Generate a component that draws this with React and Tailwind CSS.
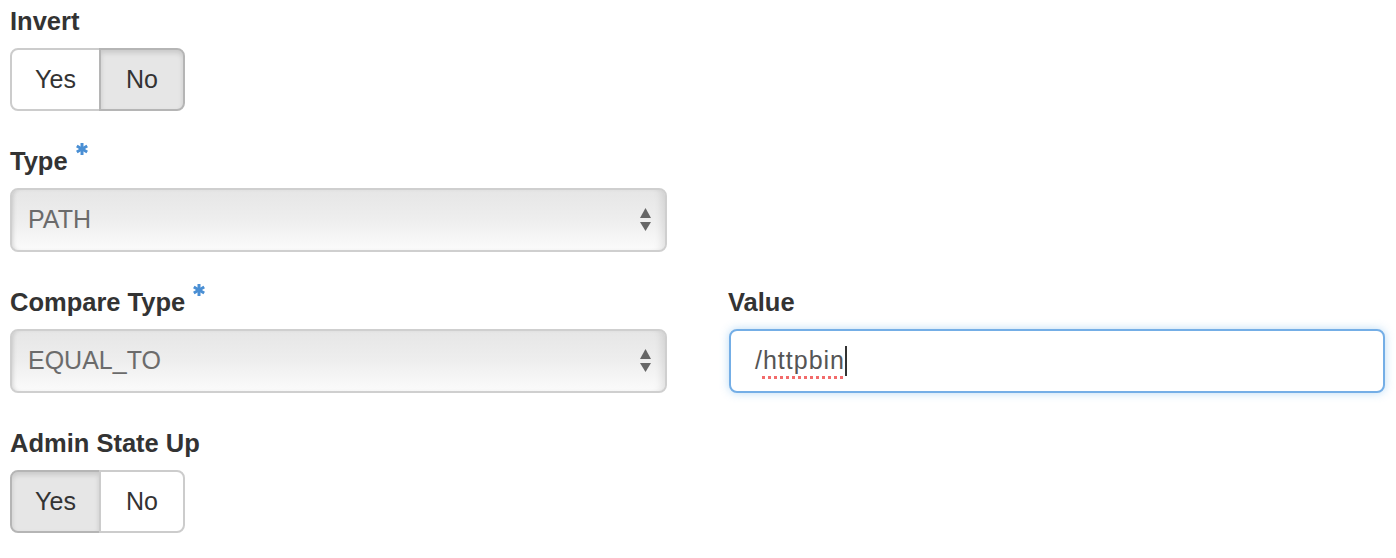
import React from "react";

const font = { fontFamily: '"Liberation Sans", Arial, sans-serif' };

function Asterisk() {
	return (
		<svg width="12" height="12" viewBox="0 0 12 12" className="ml-[8px] self-start">
			<g stroke="#4a8fd4" strokeWidth="3">
				<line x1="6" y1="0" x2="6" y2="12" />
				<line x1="0.8" y1="3" x2="11.2" y2="9" />
				<line x1="0.8" y1="9" x2="11.2" y2="3" />
			</g>
		</svg>
	);
}

function Label({ children, required }) {
	return (
		<div className="flex items-start h-[36px] mb-[9px]">
			<span className="text-[25.5px] leading-[36px] font-bold text-[#333]">{children}</span>
			{required && <Asterisk />}
		</div>
	);
}

function Toggle({ value }) {
	const base = "h-[63px] flex items-center justify-center text-[25px] text-[#333] border-2";
	const on = "bg-[#e6e6e6] border-[#b5b5b5] shadow-[inset_0_3px_5px_rgba(0,0,0,0.125)]";
	const off = "bg-white border-[#cccccc]";
	return (
		<div className="flex">
			<div className={`${base} w-[91px] rounded-l-[8px] ${value ? on : off}`}>Yes</div>
			<div className={`${base} w-[86px] -ml-[2px] rounded-r-[8px] ${value ? off : on}`}>No</div>
		</div>
	);
}

function Select({ text }) {
	return (
		<div className="relative h-[64px] rounded-[8px] border-2 border-[#cfcfcf] bg-gradient-to-b from-[#e6e6e6] via-[#eeeeee] to-[#fbfbfb] shadow-[inset_3px_0_4px_-2px_rgba(0,0,0,0.15),inset_-12px_0_10px_-10px_rgba(0,0,0,0.12)] flex items-center pl-[16px]">
			<span className="text-[25px] text-[#6b6b6b]">{text}</span>
			<svg width="11" height="24" viewBox="0 0 11 24" className="absolute right-[14px] top-[18px]">
				<polygon points="5.5,0 11,10 0,10" fill="#666" />
				<polygon points="0,14 11,14 5.5,23" fill="#666" />
			</svg>
		</div>
	);
}

export default function App() {
	return (
		<div className="bg-white w-[1396px] h-[558px] pl-[10px] pt-[3px]" style={font}>
			<div className="mb-[32px]">
				<Label>Invert</Label>
				<Toggle value={false} />
			</div>

			<div className="mb-[32px] w-[657px]">
				<Label required>Type</Label>
				<Select text="PATH" />
			</div>

			<div className="mb-[32px] grid grid-cols-[657px_656px] gap-x-[62px]">
				<div>
					<Label required>Compare Type</Label>
					<Select text="EQUAL_TO" />
				</div>
				<div className="-ml-[1px]">
					<Label>Value</Label>
					<div className="ml-[1px] h-[64px] rounded-[8px] border-2 border-[#74aee6] bg-white shadow-[0_0_10px_rgba(102,175,233,0.45)] flex items-center pl-[24px]">
						<span className="text-[25px] text-[#555] tracking-[1px]">
							/<span className="underline decoration-dotted decoration-[#f26b6b] decoration-[3px] underline-offset-[7px]">httpbin</span>
						</span>
						<span className="w-[2px] h-[30px] bg-[#333]"></span>
					</div>
				</div>
			</div>

			<div>
				<Label>Admin State Up</Label>
				<Toggle value={true} />
			</div>
		</div>
	);
}
